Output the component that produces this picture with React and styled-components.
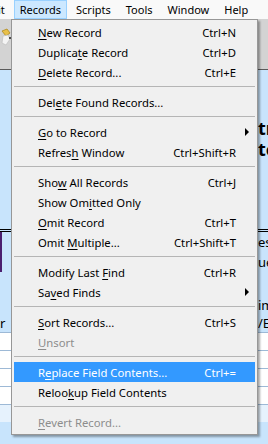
import React from "react";
import styled, { createGlobalStyle } from "styled-components";

const GlobalStyle = createGlobalStyle`
  html, body {
    margin: 0;
    padding: 0;
  }
  body {
    font-family: "Noto Sans", "DejaVu Sans", sans-serif;
    font-size: 11.3px;
    color: #000;
    background: #c8e4fc;
  }
`;

const topMenus = ["Records", "Scripts", "Tools", "Window", "Help"];

const menu = [
  { label: "New Record", key: 0, shortcut: "Ctrl+N" },
  { label: "Duplicate Record", key: 7, shortcut: "Ctrl+D" },
  { label: "Delete Record...", key: 0, shortcut: "Ctrl+E" },
  "sep",
  { label: "Delete Found Records...", key: 3 },
  "sep",
  { label: "Go to Record", key: 0, submenu: true },
  { label: "Refresh Window", key: 6, shortcut: "Ctrl+Shift+R" },
  "sep",
  { label: "Show All Records", key: 3, shortcut: "Ctrl+J" },
  { label: "Show Omitted Only", key: 7 },
  { label: "Omit Record", key: 0, shortcut: "Ctrl+T" },
  { label: "Omit Multiple...", key: 5, shortcut: "Ctrl+Shift+T" },
  "sep",
  { label: "Modify Last Find", key: 12, shortcut: "Ctrl+R" },
  { label: "Saved Finds", key: 2, submenu: true },
  "sep",
  { label: "Sort Records...", key: 0, shortcut: "Ctrl+S" },
  { label: "Unsort", key: 0, disabled: true },
  "sep",
  { label: "Replace Field Contents...", key: 1, shortcut: "Ctrl+=", active: true },
  { label: "Relookup Field Contents", key: 5 },
  "sep",
  { label: "Revert Record...", key: 0, disabled: true },
];

function Mnemonic({ label, index }) {
  return (
    <span>
      {label.slice(0, index)}
      <u>{label[index]}</u>
      {label.slice(index + 1)}
    </span>
  );
}

export default function App() {
  return (
    <Screen>
      <GlobalStyle />
      <MenuBar>
        <EditStub>Edit</EditStub>
        {topMenus.map((m) => (
          <TopItem key={m} $open={m === "Records"}>
            {m}
          </TopItem>
        ))}
      </MenuBar>

      <Toolbar>
        <ToolIcon viewBox="0 0 12 20">
          <path d="M2 4 L7 2 L10 6 L6 9 Z" fill="#e8c04a" stroke="#b08a20" strokeWidth="0.8" />
          <path d="M3 9 L8 8 L10 12 L6 18 L2 16 Z" fill="#f4f4f4" stroke="#bbb" strokeWidth="0.6" />
          <circle cx="10" cy="11" r="1" fill="#222" />
        </ToolIcon>
      </Toolbar>

      <Body>
        <Band $h={48} />
        <Band $h={20}>
          <Side />
          <BigText>tr</BigText>
        </Band>
        <Band $h={22}>
          <Side />
          <BigText>tc</BigText>
        </Band>
        <Band $h={69} />
        <DoubleRule />
        <Band $h={19}>
          <PurpleBar />
          <SmallText>es</SmallText>
        </Band>
        <Band $h={21}>
          <PurpleBar />
          <SmallText>ue</SmallText>
        </Band>
        <Band $h={24} />
        <Band $h={18}>
          <Side />
          <SmallText>im</SmallText>
        </Band>
        <Band $h={18}>
          <SideText>r</SideText>
          <SmallText>/E</SmallText>
        </Band>
        {[0, 1, 2, 3, 4].map((i) => (
          <GridRow key={i} />
        ))}
      </Body>

      <Dropdown>
        {menu.map((item, i) =>
          item === "sep" ? (
            <Separator key={i} />
          ) : (
            <Item key={i} $active={item.active} $disabled={item.disabled}>
              <Mnemonic label={item.label} index={item.key} />
              {item.shortcut && <Shortcut>{item.shortcut}</Shortcut>}
              {item.submenu && <Arrow />}
            </Item>
          )
        )}
      </Dropdown>
    </Screen>
  );
}

const Screen = styled.div`
  position: relative;
  width: 268px;
  height: 444px;
  overflow: hidden;
  display: flex;
  flex-direction: column;
`;

const MenuBar = styled.div`
  height: 19px;
  display: flex;
  align-items: stretch;
  background: #f9f9f9;
  margin-left: -15px;
  font-size: 11px;
`;

const EditStub = styled.div`
  display: flex;
  align-items: center;
  padding: 0 6px 0 0;
  margin-right: 3px;
`;

const TopItem = styled.div`
  display: flex;
  align-items: center;
  padding: 0 5px;
  margin-right: 3px;
  box-sizing: border-box;
  border: 1px solid ${(p) => (p.$open ? "#99d1ff" : "transparent")};
  background: ${(p) => (p.$open ? "#cce8ff" : "transparent")};
`;

const Toolbar = styled.div`
  height: 51px;
  background: #d3d3d3;
  border-bottom: 1px solid #5a5a5a;
  box-shadow: 0 1px 0 #fff;
  display: flex;
  align-items: flex-start;
  padding-top: 8px;
  box-sizing: border-box;
`;

const ToolIcon = styled.svg`
  width: 12px;
  height: 20px;
`;

const Body = styled.div`
  flex: 1;
  background: #c8e4fc;
  display: flex;
  flex-direction: column;
`;

const Band = styled.div`
  height: ${(p) => p.$h}px;
  display: flex;
  justify-content: space-between;
  align-items: center;
  flex-shrink: 0;
`;

const Side = styled.div`
  width: 11px;
`;

const SideText = styled.div`
  width: 11px;
  font-size: 13px;
`;

const BigText = styled.div`
  width: 10px;
  overflow: hidden;
  font-size: 18px;
  font-weight: 700;
  white-space: nowrap;
  line-height: 20px;
  height: 20px;
`;

const SmallText = styled.div`
  width: 10px;
  overflow: hidden;
  font-size: 13px;
  white-space: nowrap;
`;

const DoubleRule = styled.div`
  height: 3px;
  border-top: 1px solid #000;
  border-bottom: 1px solid #000;
  box-sizing: border-box;
  flex-shrink: 0;
`;

const PurpleBar = styled.div`
  width: 2px;
  align-self: stretch;
  background: #4b1f6f;
`;

const GridRow = styled.div`
  height: 18px;
  flex-shrink: 0;
  background: #fff;
  border-top: 1px solid #9db9d6;
  box-sizing: border-box;
  &:last-child {
    background: #e6f2fd;
  }
`;

const Dropdown = styled.div`
  position: absolute;
  top: 19px;
  left: 11px;
  width: 247px;
  box-sizing: border-box;
  padding: 2px;
  background: #f0f0f0;
  border: 1px solid #979797;
  box-shadow: 2px 2px 2px rgba(0, 0, 0, 0.35);
  display: flex;
  flex-direction: column;
`;

const Item = styled.div`
  position: relative;
  height: 20px;
  display: flex;
  align-items: center;
  justify-content: space-between;
  padding: 0 19px 0 24px;
  white-space: nowrap;
  background: ${(p) => (p.$active ? "#3399ff" : "transparent")};
  color: ${(p) => (p.$active ? "#fff" : p.$disabled ? "#8d8d8d" : "#000")};
  u {
    text-decoration: underline;
    text-underline-offset: 2px;
  }
`;

const Shortcut = styled.span``;

const Arrow = styled.span`
  position: absolute;
  right: 6px;
  top: 6px;
  width: 0;
  height: 0;
  border-top: 4px solid transparent;
  border-bottom: 4px solid transparent;
  border-left: 4px solid #000;
`;

const Separator = styled.div`
  height: 10px;
  flex-shrink: 0;
  position: relative;
  &::after {
    content: "";
    position: absolute;
    left: 0;
    right: 0;
    top: 4px;
    height: 1px;
    background: #b5b5b5;
  }
`;
